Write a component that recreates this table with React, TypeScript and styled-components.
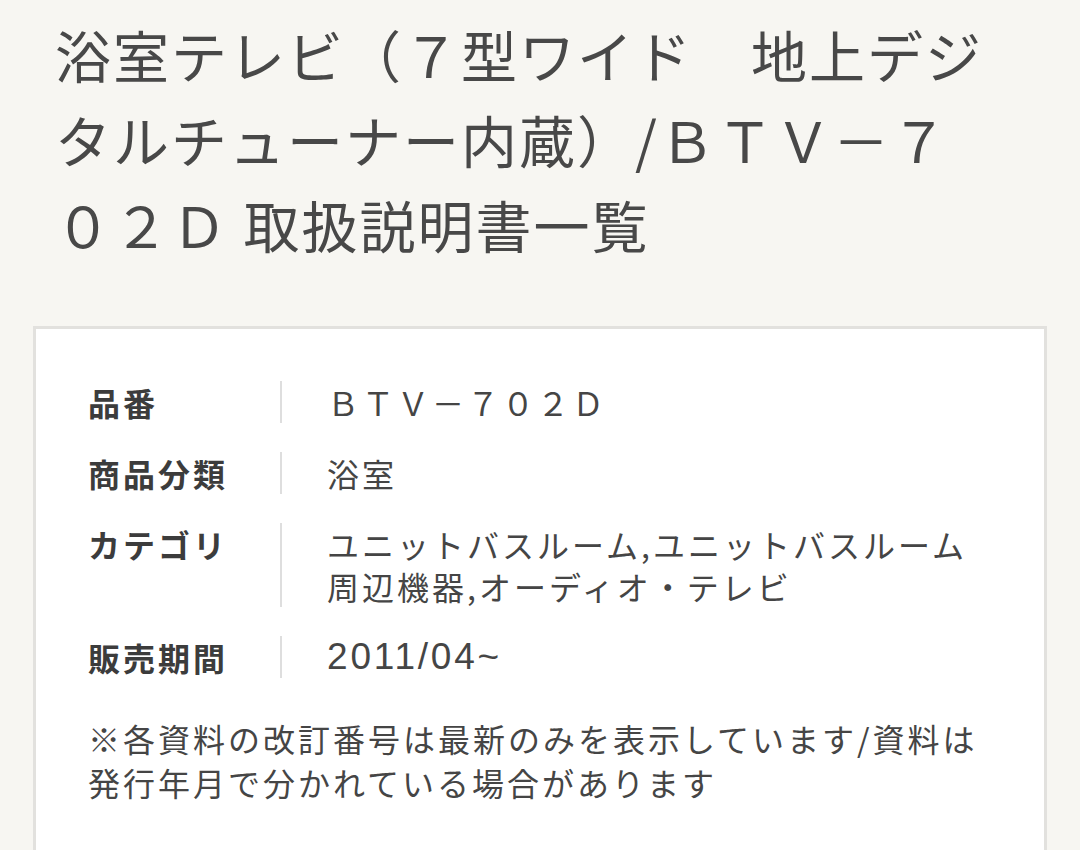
import React from "react";
import styled, { createGlobalStyle } from "styled-components";

const Global = createGlobalStyle`
  html, body { margin: 0; padding: 0; background: #f7f6f2; }
  body {
    font-family: "Noto Sans CJK JP", "Noto Sans", sans-serif;
    color: #454545;
  }
`;

const Page = styled.div`
  padding: 0 33px;
`;

const Title = styled.h1`
  margin: 11px 0 0;
  padding: 0 55px 0 22px;
  font-size: 56px;
  font-weight: 400;
  line-height: 85px;
  letter-spacing: 2px;
  color: #484848;
`;

const Card = styled.section`
  margin-top: 60px;
  background: #ffffff;
  border: 3px solid #e2e1de;
  border-bottom: none;
  padding: 52px 52px 60px 52px;
  min-height: 500px;
`;

const Specs = styled.dl`
  margin: 0;
  display: flex;
  flex-direction: column;
  gap: 29px;
`;

const Row = styled.div`
  display: grid;
  grid-template-columns: 194px 1fr;
`;

const Label = styled.dt`
  font-size: 32px;
  font-weight: 700;
  line-height: 42px;
  letter-spacing: 3px;
  color: #3c3c3c;
  border-right: 2px solid #dedede;
`;

const Value = styled.dd<{ $latin?: boolean }>`
  margin: 0;
  padding-left: 45px;
  font-family: ${(p) =>
    p.$latin ? '"Liberation Sans", "Noto Sans CJK JP", sans-serif' : "inherit"};
  font-size: ${(p) => (p.$latin ? "37px" : "32px")};
  font-weight: 400;
  line-height: 42px;
  letter-spacing: ${(p) => (p.$latin ? "2.8px" : "3px")};
  color: #454545;
`;

const Note = styled.p`
  margin: 38px 0 0;
  font-size: 32px;
  line-height: 44px;
  letter-spacing: 3px;
  color: #454545;
`;

const specs: { k: string; v: string; latin?: boolean }[] = [
  { k: "品番", v: "ＢＴＶ－７０２Ｄ" },
  { k: "商品分類", v: "浴室" },
  { k: "カテゴリ", v: "ユニットバスルーム,ユニットバスルーム周辺機器,オーディオ・テレビ" },
  { k: "販売期間", v: "2011/04~", latin: true },
];

export default function App() {
  return (
    <>
      <Global />
      <Page>
        <Title>
          浴室テレビ（７型ワイド　地上デジタルチューナー内蔵）/ＢＴＶ－７０２Ｄ 取扱説明書一覧
        </Title>
        <Card>
          <Specs>
            {specs.map(({ k, v, latin }) => (
              <Row key={k}>
                <Label>{k}</Label>
                <Value $latin={latin}>{v}</Value>
              </Row>
            ))}
          </Specs>
          <Note>
            ※各資料の改訂番号は最新のみを表示しています/資料は発行年月で分かれている場合があります
          </Note>
        </Card>
      </Page>
    </>
  );
}
